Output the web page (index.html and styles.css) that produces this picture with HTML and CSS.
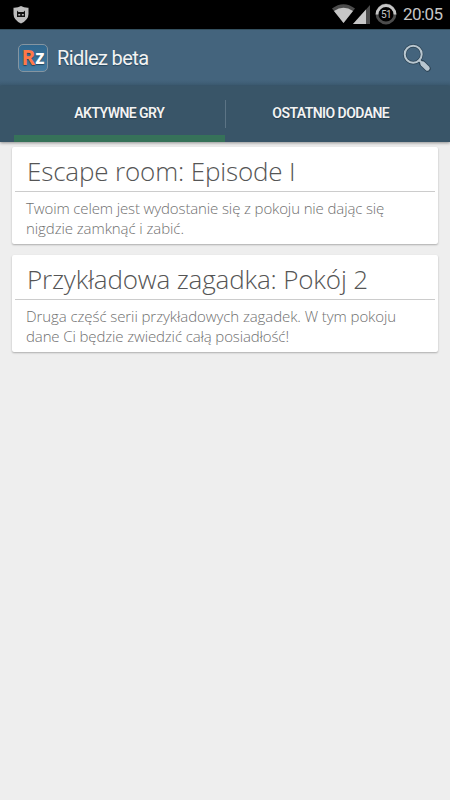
FILE: index.html
```html
<!DOCTYPE html>
<html lang="pl">
<head>
<meta charset="utf-8">
<title>Ridlez beta</title>
<link rel="stylesheet" href="styles.css">
</head>
<body>
<div class="status">
  <svg class="shield" width="16" height="18" viewBox="0 0 16 18"><path d="M8 0Q11 2 15.500 1.800V8Q15.500 14 8 17.500Q.5 14 .5 8V1.800Q5 2 8 0Z" fill="#bdbdbd"/><path d="M4 4.500L5.500 6H10.500L12 4.500V11H4Z" fill="#111"/><path d="M5.300 8h1.900v1.500H5.300zM8.900 8h1.900v1.500H8.900z" fill="#bdbdbd"/></svg>
  <svg class="wifi" width="24" height="20" viewBox="0 0 24 20"><path d="M0 4.500Q11.500-4 23 4.500L11.500 19Z" fill="#4c4c4c"/><path d="M2 7Q11.500.5 21 7L11.500 19Z" fill="#c6c6c6"/></svg>
  <svg class="signal" width="17" height="19" viewBox="0 0 17 19"><path d="M0 19L17 0V19Z" fill="#4c4c4c"/><path d="M0 19L13 4.500V19Z" fill="#c6c6c6"/></svg>
  <div class="battery">
    <svg width="22" height="22" viewBox="0 0 22 22"><circle cx="11" cy="11" r="9" fill="none" stroke="#4c4c4c" stroke-width="2.800"/><path d="M2 11.500A9 9 0 0 1 20 11.500" fill="none" stroke="#c6c6c6" stroke-width="2.800"/></svg>
    <span class="level">51</span>
  </div>
  <span class="clock">20:05</span>
</div>
<header class="bar">
  <div class="logo"><span class="logo-r">R</span><span class="logo-z">z</span></div>
  <h1 class="title">Ridlez beta</h1>
  <svg class="search" width="28" height="28" viewBox="0 0 28 28"><g fill="none" stroke="#2c4354" stroke-linecap="round"><circle cx="10.200" cy="10.200" r="8.500" stroke-width="3.400"/><path d="M16.500 16.500L19 19" stroke-width="4"/><path d="M19.500 19.500L24.500 24.500" stroke-width="6.500"/></g><g fill="none" stroke="#b9c7d0" stroke-linecap="round"><circle cx="10.200" cy="10.200" r="8.500" stroke-width="2"/><path d="M16.300 16.300L19 19" stroke-width="2"/><path d="M19.700 19.700L24.300 24.300" stroke-width="4.800"/></g></svg>
</header>
<nav class="tabs">
  <div class="tab active"><span class="label">AKTYWNE GRY</span></div>
  <i class="divider"></i>
  <div class="tab"><span class="label">OSTATNIO DODANE</span></div>
</nav>
<main class="list">
  <article class="card">
    <h2 class="name">Escape room: Episode I</h2>
    <p class="text"><span class="tight">Twoim celem jest wydostanie się z pokoju nie dając się</span><br>nigdzie zamknąć i zabić.</p>
  </article>
  <article class="card">
    <h2 class="name">Przykładowa zagadka: Pokój 2</h2>
    <p class="text">Druga część serii przykładowych zagadek. W tym pokoju<br><span class="tight">dane Ci będzie zwiedzić całą posiadłość!</span></p>
  </article>
</main>
</body>
</html>
```
FILE: styles.css
```css
* { box-sizing: border-box; }
body { margin: 0; height: 800px; background: #eee; font-family: "Open Sans", sans-serif; overflow: hidden; }
.status { height: 29px; background: #000; display: flex; align-items: flex-start; color: #c6c6c6; font-family: Roboto, sans-serif; }
.shield { margin: 6px 0 0 13px; }
.wifi { margin: 4px 0 0 332px; margin-left: 303px; }
.signal { margin: 5px 0 0 -3px; }
.battery { margin: 3px 0 0 5px; width: 22px; height: 22px; display: grid; place-items: center; }
.battery svg, .level { grid-area: 1 / 1; }
.level { font-size: 10px; line-height: 21px; letter-spacing: -.7px; }
.clock { margin: 3px 0 0 6px; font-size: 17px; font-weight: 400; line-height: 23px; letter-spacing: -.55px; white-space: nowrap; }
.bar { height: 57px; display: flex; align-items: flex-start; background: linear-gradient(#44647d 0 50px, #3c5a70); border-top: 1px solid #34505f; }
.logo { margin: 14px 0 0 18px; width: 30px; height: 28px; border: 1px solid #8595a1; border-radius: 5px; background: linear-gradient(#30678e, #447ba1); display: flex; justify-content: center; font-weight: 700; text-shadow: 0 1px 1px #24465d; }
.logo-r { color: #ff7848; font-size: 21px; line-height: 24px; }
.logo-z { color: #fff; font-size: 19px; line-height: 24px; }
.title { margin: 15px 0 0 9px; width: 300px; color: #f3f3f3; font: 400 20px/26px Roboto, sans-serif; letter-spacing: -.6px; text-shadow: 0 1px 1px #24465d; }
.search { margin: 14px 0 0 46px; flex: none; }
.tabs { height: 56px; background: #395568; display: flex; padding: 0 14px; box-shadow: 0 1px 3px rgba(0, 0, 0, .4); position: relative; }
.tab { flex: 1; text-align: center; border-bottom: 7px solid transparent; }
.active { border-bottom-color: #367259; }
.divider { width: 1px; height: 28px; margin-top: 14px; background: #5c7485; }
.label { color: #f3f3f3; font: 600 14px/54px Roboto, sans-serif; letter-spacing: -.55px; text-shadow: 0 1px 1px #243b4b; white-space: nowrap; }
.list { padding: 5px 12px; display: grid; gap: 11px; }
.card { height: 97px; padding: 0 3px; background: #fff; border-radius: 2px; box-shadow: 0 1px 2px rgba(0, 0, 0, .28); }
.name { margin: 0; height: 45px; padding: 0 12px; border-bottom: 1px solid #ccc; color: #555; font-size: 26px; font-weight: 300; line-height: 49px; letter-spacing: -.15px; white-space: nowrap; }
.text { margin: 0; padding: 6px 11px 0; color: #707070; font-size: 15px; font-weight: 300; line-height: 20px; letter-spacing: -.08px; white-space: nowrap; }
.tight { letter-spacing: -.125px; }
```
